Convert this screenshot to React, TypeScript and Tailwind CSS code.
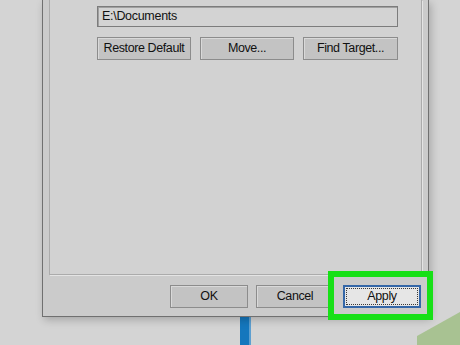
const font = { fontFamily: "'Liberation Sans', Arial, sans-serif" };

function WinButton({ label, width }: { label: string; width: string }) {
  return (
    <div
      className={`${width} h-[23px] flex items-center justify-center bg-[#c3c3c3] border border-[#8c8c8c] shadow-[inset_1px_1px_0_#d9d9d9] text-[12.5px] tracking-[-0.4px] text-[#111]`}
    >
      {label}
    </div>
  );
}

export default function App() {
  return (
    <div
      className="relative w-[460px] h-[345px] overflow-hidden bg-[#d4d4d4]"
      style={font}
    >
      {/* green highlight around Apply, drawn under the dialog's button */}
      <div className="absolute left-[328px] top-[271px] w-[105px] h-[49px] border-[6px] border-[#17e017] bg-[#e6e6e6]" />

      {/* dialog window */}
      <div className="relative ml-[42px] w-[387px] h-[317px] flex flex-col bg-[#cbcbcb] border border-t-0 border-[#707070] shadow-[2px_3px_8px_rgba(0,0,0,0.22)]">
        {/* tab page */}
        <div className="mx-[6px] h-[275px] bg-[#d2d2d2] border border-t-0 border-[#ababab] shadow-[1px_1px_0_#e4e4e4] pl-[47px] pt-[6px]">
          <div className="w-[301px] h-[21px] flex items-center pl-[4px] bg-[#d3d3d3] border border-[#7c7c7c] shadow-[inset_1px_1px_0_#a0a0a0] text-[12.5px] tracking-[-0.3px] text-[#111]">
            E:\Documents
          </div>
          <div className="mt-[10px] flex gap-[9px] w-[301px]">
            <WinButton label="Restore Default" width="w-[94px]" />
            <WinButton label="Move..." width="w-[94px]" />
            <WinButton label="Find Target..." width="w-[95px]" />
          </div>
        </div>
        {/* footer */}
        <div className="flex-1 flex justify-end items-start pt-[10px] pr-[7px] gap-[8px]">
          <WinButton label="OK" width="w-[78px]" />
          <WinButton label="Cancel" width="w-[78px]" />
          <div className="w-[78px] h-[23px] ml-[1px] flex items-center justify-center p-[1px] bg-[#e6e6e6] border-2 border-[#3467a8]">
            <div className="w-full h-full flex items-center justify-center border border-dotted border-[#3a3a3a] text-[12.5px] tracking-[-0.4px] text-[#111]">
              Apply
            </div>
          </div>
        </div>
      </div>

      {/* green border redrawn on top so it overlaps the dialog edge */}
      <div className="absolute left-[328px] top-[271px] w-[105px] h-[49px] border-[6px] border-[#17e017] pointer-events-none" />

      {/* blue bar beneath */}
      <div className="ml-[240px] w-[11px] h-[28px] bg-[#1577bd] border-r-[2px] border-[#5d9fd0]" />

      {/* green-gray corner shape */}
      <svg
        className="absolute left-0 top-0 pointer-events-none"
        width="460"
        height="345"
        viewBox="0 0 460 345"
      >
        <polygon points="417,345 417,336 460,312 460,345" fill="#a8c292" />
      </svg>
    </div>
  );
}
